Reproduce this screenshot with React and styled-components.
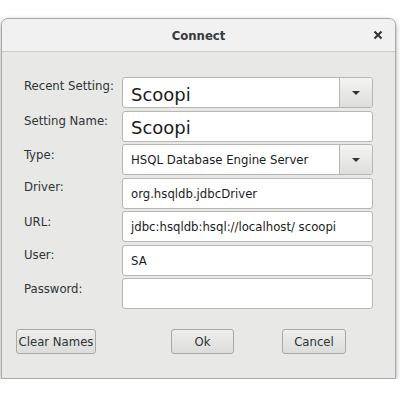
import React from "react";
import styled, { createGlobalStyle } from "styled-components";

const GlobalStyle = createGlobalStyle`
  body {
    margin: 0;
    background: #ffffff;
    font-family: "DejaVu Sans Condensed", "DejaVu Sans", sans-serif;
    color: #2e3436;
  }
`;

const Dialog = styled.div`
  width: 393px;
  margin: 18px 0 0 1px;
  border: 1px solid #a9a9a9;
  border-radius: 7px 7px 0 0;
  background: #e8e8e7;
  box-shadow: 0 2px 5px rgba(0, 0, 0, 0.35);
  overflow: hidden;
`;

const TitleBar = styled.div`
  height: 32px;
  display: grid;
  grid-template-columns: 1fr auto 1fr;
  align-items: center;
  background: #f1f1f1;
  border-bottom: 1px solid #cbcbca;
`;

const Title = styled.div`
  grid-column: 2;
  font-size: 13px;
  font-weight: bold;
  color: #363b3d;
`;

const Close = styled.div`
  justify-self: end;
  margin-right: 12px;
  display: flex;
  align-items: center;
`;

const Body = styled.div`
  padding: 25px 22px 24px 22px;
`;

const Form = styled.div`
  display: grid;
  grid-template-columns: 98px 251px;
  row-gap: 2.5px;
`;

const Label = styled.div`
  font-size: 13px;
  color: #2e3436;
  padding-top: ${(p) => p.offset || 2}px;
  height: 31px;
  box-sizing: border-box;
`;

const Field = styled.div`
  height: 31px;
  box-sizing: border-box;
  display: flex;
  align-items: center;
  background: #ffffff;
  border: 1px solid #b6b6b3;
  border-radius: 3px;
  overflow: hidden;
`;

const Value = styled.div`
  flex: 1;
  padding: ${(p) => (p.big ? "3px 0 0 8px" : "0 0 0 8px")};
  font-family: ${(p) => (p.big ? `"DejaVu Sans", sans-serif` : `"DejaVu Sans Condensed", "DejaVu Sans", sans-serif`)};
  font-size: ${(p) => (p.big ? 18 : 13)}px;
  color: #1c1c1c;
  white-space: nowrap;
`;

const DropButton = styled.div`
  width: 32px;
  align-self: stretch;
  display: flex;
  align-items: center;
  justify-content: center;
  border-left: 1px solid #b6b6b3;
  background: linear-gradient(#f4f4f3, #dededc);
`;

const Arrow = styled.div`
  width: 0;
  height: 0;
  border-left: 4px solid transparent;
  border-right: 4px solid transparent;
  border-top: 4px solid #2e3436;
`;

const ButtonRow = styled.div`
  display: grid;
  grid-template-columns: 155px 111px auto;
  margin: 20px 0 0 -8px;
`;

const Button = styled.div`
  width: ${(p) => p.w}px;
  height: 25px;
  box-sizing: border-box;
  display: flex;
  align-items: center;
  justify-content: center;
  border: 1px solid #a8a8a6;
  border-radius: 3px;
  background: linear-gradient(#eeeeed, #dcdcda);
  font-size: 13px;
  color: #2e3436;
`;

const rows = [
  { label: "Recent Setting:", value: "Scoopi", big: true, combo: true, offset: 1 },
  { label: "Setting Name:", value: "Scoopi", big: true, offset: 2 },
  { label: "Type:", value: "HSQL Database Engine Server", combo: true, offset: 3 },
  { label: "Driver:", value: "org.hsqldb.jdbcDriver", offset: 1 },
  { label: "URL:", value: "jdbc:hsqldb:hsql://localhost/ scoopi", offset: 3 },
  { label: "User:", value: "SA", offset: 2 },
  { label: "Password:", value: "", offset: 3 },
];

export default function App() {
  return (
    <>
      <GlobalStyle />
      <Dialog>
        <TitleBar>
          <Title>Connect</Title>
          <Close>
            <svg width="10" height="10" viewBox="0 0 10 10">
              <path d="M1.5 1.5 L8.5 8.5 M8.5 1.5 L1.5 8.5" stroke="#2e3436" strokeWidth="2" />
            </svg>
          </Close>
        </TitleBar>
        <Body>
          <Form>
            {rows.map((r) => (
              <React.Fragment key={r.label}>
                <Label offset={r.offset}>{r.label}</Label>
                <Field>
                  <Value big={r.big}>{r.value}</Value>
                  {r.combo && (
                    <DropButton>
                      <Arrow />
                    </DropButton>
                  )}
                </Field>
              </React.Fragment>
            ))}
          </Form>
          <ButtonRow>
            <Button w={80}>Clear Names</Button>
            <Button w={63}>Ok</Button>
            <Button w={64}>Cancel</Button>
          </ButtonRow>
        </Body>
      </Dialog>
    </>
  );
}
